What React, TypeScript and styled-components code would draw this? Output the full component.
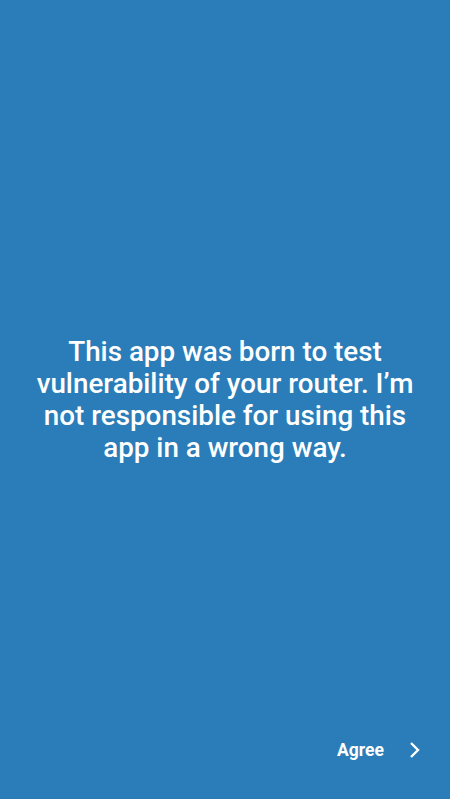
import React from "react";
import styled, { createGlobalStyle } from "styled-components";

const Global = createGlobalStyle`
  html, body { margin: 0; padding: 0; }
  body { background: #2a7db8; font-family: Roboto, "Noto Sans", sans-serif; }
`;

const Screen = styled.div`
  width: 450px;
  height: 799px;
  background: #2a7db8;
  display: grid;
  grid-template-rows: 1fr auto 1fr;
  color: #ffffff;
`;

const Message = styled.p`
  grid-row: 2;
  margin: 0;
  padding: 0 30px;
  text-align: center;
  font-size: 27.8px;
  font-weight: 500;
  line-height: 32px;
`;

const Footer = styled.div`
  grid-row: 3;
  align-self: end;
  display: flex;
  justify-content: flex-end;
  padding: 0 30px 39px 0;
`;

const AgreeButton = styled.button`
  display: flex;
  align-items: center;
  gap: 24px;
  background: none;
  border: none;
  padding: 0;
  color: #ffffff;
  font-family: Roboto, sans-serif;
  font-size: 17.5px;
  font-weight: 700;
  cursor: pointer;
`;

export default function App() {
  return (
    <>
      <Global />
      <Screen>
        <Message>
          This app was born to test vulnerability of your router. I’m not responsible for using this app in a wrong way.
        </Message>
        <Footer>
          <AgreeButton>
            Agree
            <svg width="12" height="18" viewBox="0 0 12 18">
              <path d="M3 2 L10 9 L3 16" fill="none" stroke="#fff" strokeWidth="2.4" />
            </svg>
          </AgreeButton>
        </Footer>
      </Screen>
    </>
  );
}
